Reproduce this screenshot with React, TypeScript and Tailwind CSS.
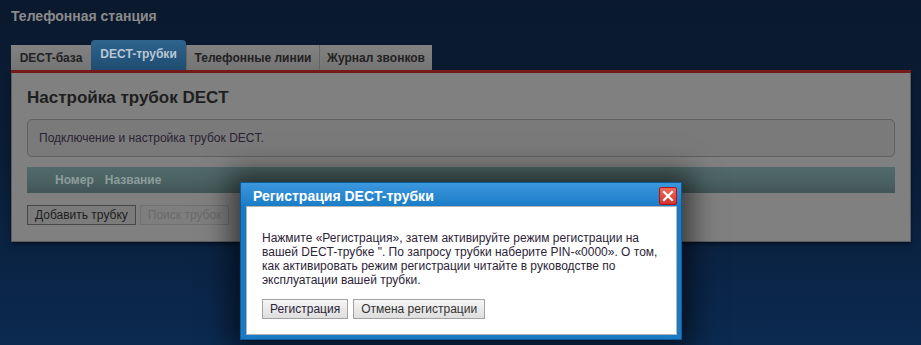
import React from 'react';

const tabs = [
  { label: 'DECT-база', active: false, w: 'w-[80px]' },
  { label: 'DECT-трубки', active: true, w: 'w-[95px]' },
  { label: 'Телефонные линии', active: false, w: 'w-[133px]' },
  { label: 'Журнал звонков', active: false, w: 'w-[113px]' },
];

const font = { fontFamily: '"Liberation Sans", Arial, sans-serif' };

const RegisterDialog = () => {
  return (
    <div className="absolute left-[240px] top-[182px] w-[442px] border border-[#0e5a98] bg-[#1a7bc4] shadow-[0_0_26px_10px_rgba(0,0,0,0.55)]">
      <div className="relative h-[22px] bg-gradient-to-b from-[#3b97de] to-[#1b7ec8] pl-[12px] flex items-center">
        <span className="text-[14px] font-bold text-white leading-[16px] mt-[3px]">Регистрация DECT-трубки</span>
        <button className="absolute right-[4px] top-[4px] w-[18px] h-[18px] border border-[#a8151a] rounded-[2px] bg-gradient-to-b from-[#f06a56] to-[#d6302a] flex items-center justify-center">
          <svg width="12" height="12" viewBox="0 0 12 12">
            <path d="M2 2 L10 10 M10 2 L2 10" stroke="#ffffff" strokeWidth="2.2" strokeLinecap="square" />
          </svg>
        </button>
      </div>
      <div className="ml-[5px] mr-[4px] mb-[4px] mt-px bg-white border border-[#b5b5b5] pl-[15px] pr-[10px] pt-[24px] pb-[15px]">
        <p className="text-[12px] leading-[14px] text-[#2c2438]">
          Нажмите «Регистрация», затем активируйте режим регистрации на<br />
          вашей DECT-трубке ". По запросу трубки наберите PIN-«0000». О том,<br />
          как активировать режим регистрации читайте в руководстве по<br />
          эксплуатации вашей трубки.
        </p>
        <div className="flex gap-[5px] mt-[12px]">
          <button className="h-[20px] px-[7px] text-[12px] text-[#2c2438] border border-[#a2a2a2] bg-gradient-to-b from-[#f6f6f6] to-[#dedede] leading-[18px]">
            Регистрация
          </button>
          <button className="h-[20px] px-[7px] text-[12px] text-[#333] border border-[#a2a2a2] bg-gradient-to-b from-[#f6f6f6] to-[#dedede] leading-[18px]">
            Отмена регистрации
          </button>
        </div>
      </div>
    </div>
  );
};

const App = () => {
  return (
    <div className="relative w-full h-[345px] overflow-hidden bg-gradient-to-b from-[#0a192d] via-[#0a1d38] to-[#0b2a50]" style={font}>
      <div className="pl-[11px] pr-[10px] pt-[8px]">
        <h1 className="text-[14px] font-bold leading-[16px] text-[#8b8b8b]">Телефонная станция</h1>

        <div className="flex items-end h-[30px] mt-[16px]">
          {tabs.map((t) =>
            t.active ? (
              <div
                key={t.label}
                className={`${t.w} h-[30px] rounded-t-[4px] bg-gradient-to-b from-[#2f648e] to-[#1f4c70] text-[12px] font-bold text-[#b9c7d4] flex items-center justify-center pb-[3px]`}
              >
                {t.label}
              </div>
            ) : (
              <div
                key={t.label}
                className={`${t.w} h-[25px] bg-gradient-to-b from-[#828282] to-[#747474] border-l border-[#666] first:border-l-0 text-[12px] font-bold text-[#222] flex items-center justify-center`}
              >
                {t.label}
              </div>
            )
          )}
        </div>
        <div className="h-[3px] bg-[#7a1b1b]" />

        <div className="bg-[#808080] border-x border-b border-[#5c5c5c] shadow-[0_2px_4px_rgba(0,0,0,0.5)] px-[15px] pt-[15px] pb-[16px]">
          <h2 className="text-[17px] font-bold leading-[20px] text-[#1e1e1e]">Настройка трубок DECT</h2>

          <div className="mt-[11px] h-[38px] rounded-[5px] border border-[#606060] bg-[#7a7a7a] flex items-center pl-[11px]">
            <span className="text-[12px] text-[#2b2233]">Подключение и настройка трубок DECT.</span>
          </div>

          <div className="mt-[10px] h-[26px] flex items-center gap-[11px] pl-[28px] bg-gradient-to-b from-[#516969] via-[#4c6363] to-[#435555]">
            <span className="text-[12px] font-bold text-[#8d9c9c]">Номер</span>
            <span className="text-[12px] font-bold text-[#8d9c9c]">Название</span>
          </div>

          <div className="mt-[12px] flex gap-[4px]">
            <button className="h-[20px] px-[7px] text-[12px] text-[#1e1e1e] border border-[#464646] bg-[#7b7b7b] leading-[18px]">
              Добавить трубку
            </button>
            <button className="h-[20px] px-[7px] text-[12px] text-[#6a6a6a] border border-[#707070] bg-[#7e7e7e] leading-[18px]">
              Поиск трубок
            </button>
          </div>
        </div>
      </div>

      <RegisterDialog />
    </div>
  );
};

export default App;
